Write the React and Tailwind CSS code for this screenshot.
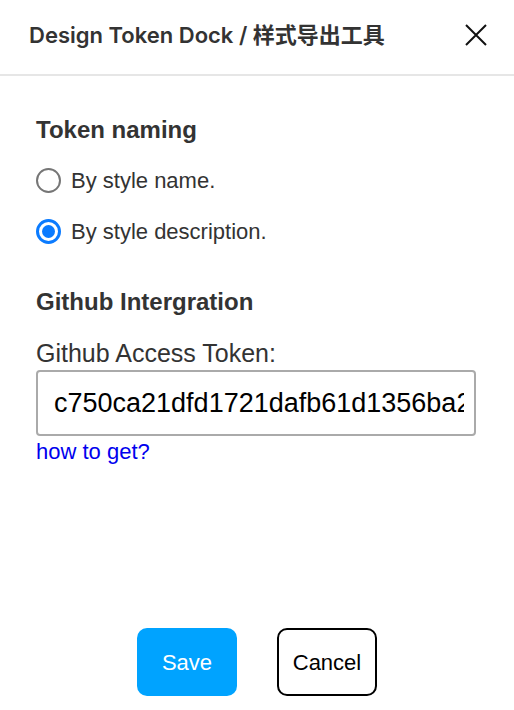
import React from "react";

const sans = { fontFamily: '"Liberation Sans", Arial, sans-serif' };

function Radio({ checked, label }) {
  return (
    <label className="flex items-center h-[25px] cursor-pointer">
      {checked ? (
        <span className="w-[25px] h-[25px] rounded-full border-[3px] border-[#0b7bff] flex items-center justify-center shrink-0">
          <span className="w-[13px] h-[13px] rounded-full bg-[#0b7bff]" />
        </span>
      ) : (
        <span className="w-[25px] h-[25px] rounded-full border-2 border-[#767676] shrink-0" />
      )}
      <span className="ml-[10px] text-[22px] leading-[24px] text-[#333]">{label}</span>
    </label>
  );
}

export default function App() {
  return (
    <div className="h-[710px] w-[514px] bg-white flex flex-col" style={sans}>
      <div className="h-[76px] border-b-2 border-[#e6e6e6] flex items-center justify-between pl-[29px] pr-[27px] pb-[4px] shrink-0">
        <div
          className="text-[22px] leading-[26px] font-semibold text-[#333] whitespace-nowrap"
          style={{ fontFamily: 'Inter, "Noto Sans CJK SC", sans-serif' }}
        >
          Design Token Dock / 样式导出工具
        </div>
        <button className="w-[22px] h-[22px] flex items-center justify-center">
          <svg width="22" height="22" viewBox="0 0 22 22" fill="none">
            <path d="M1 1L21 21M21 1L1 21" stroke="#111" strokeWidth="2" />
          </svg>
        </button>
      </div>

      <div className="flex flex-col px-[36px] pt-[42px]">
        <div className="text-[24px] leading-[24px] font-bold text-[#333]">Token naming</div>
        <div className="mt-[26px] flex flex-col gap-[26px]">
          <Radio label="By style name." />
          <Radio checked label="By style description." />
        </div>

        <div className="mt-[46px] text-[24px] leading-[24px] font-bold text-[#333]">Github Intergration</div>
        <div className="mt-[27px] text-[25px] leading-[24px] text-[#333]">Github Access Token:</div>
        <input
          readOnly
          value="c750ca21dfd1721dafb61d1356ba2f8e4c9a07b3"
          className="mt-[5px] w-[440px] h-[66px] border-2 border-[#aaaaaa] rounded-[4px] pl-[16px] pr-[10px] text-[27px] text-black outline-none"
          style={sans}
        />
        <a href="#" className="mt-[4px] text-[22px] leading-[24px] text-[#0000ee] self-start">how to get?</a>
      </div>

      <div className="mt-auto mb-[14px] flex justify-center gap-[40px]">
        <button className="w-[100px] h-[68px] rounded-[10px] bg-[#00a3ff] text-white text-[22px]" style={sans}>
          Save
        </button>
        <button className="w-[100px] h-[68px] rounded-[10px] border-2 border-black bg-white text-black text-[22px]" style={sans}>
          Cancel
        </button>
      </div>
    </div>
  );
}
